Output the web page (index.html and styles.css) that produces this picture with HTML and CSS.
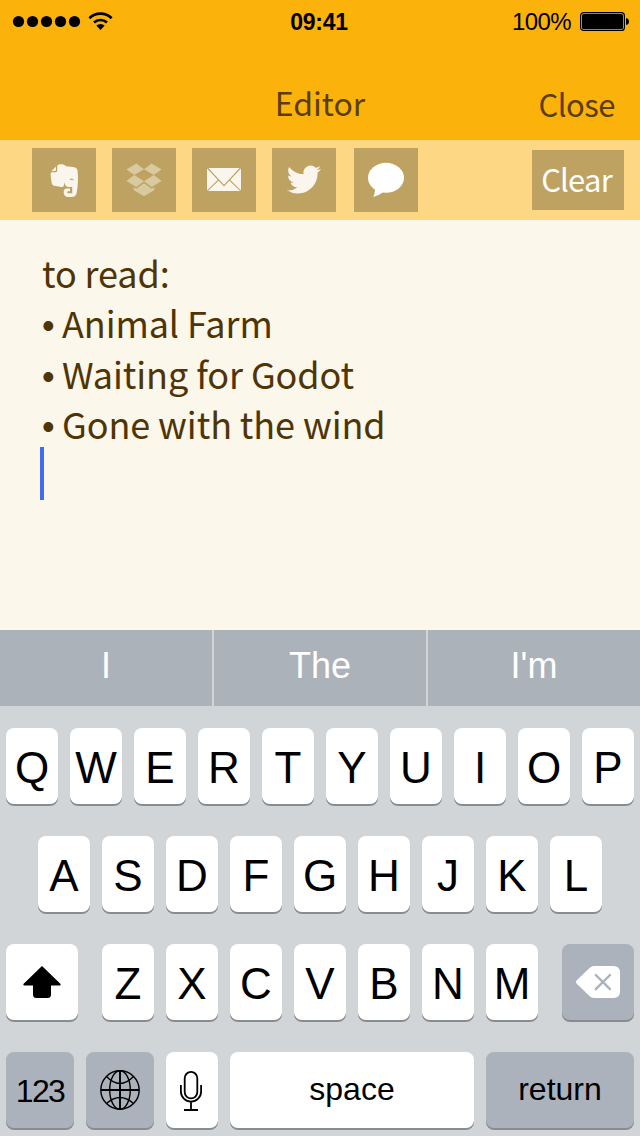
FILE: index.html
```html
<!DOCTYPE html>
<html lang="en">
<head>
  <meta charset="UTF-8">
  <meta name="viewport" content="width=device-width, initial-scale=1.0">
  <title>Editor</title>
  <link rel="stylesheet" href="styles.css">
</head>
<body>
  <header>
    <!-- Status bar -->
    <div class="status-bar">
      <svg class="signal" width="102" height="24" viewBox="0 0 102 24">
        <circle cx="6.5" cy="11.5" r="5.6"/>
        <circle cx="20.5" cy="11.5" r="5.6"/>
        <circle cx="34.5" cy="11.5" r="5.6"/>
        <circle cx="48.5" cy="11.5" r="5.6"/>
        <circle cx="62.5" cy="11.5" r="5.6"/>
        <path d="M77.4 8.2a15.8 15.8 0 0 1 22.200 0M82 12.600a9.400 9.400 0 0 1 13 0" fill="none" stroke="#000" stroke-width="2.700"/>
        <path d="M84.300 15.600a6.200 6.200 0 0 1 8.400 0L88.500 20z"/>
      </svg>
      <span class="time">09:41</span>
      <div class="battery">
        <span>100%</span>
        <svg width="50" height="20" viewBox="0 0 50 20">
          <rect x="0.6" y="0.6" width="43.8" height="17.8" rx="3" fill="none" stroke="#000" stroke-width="1.2"/>
          <rect x="2" y="2" width="41" height="15" rx="1.5"/>
          <path d="M46 6q3 .5 3 3.500t-3 3.500z"/>
        </svg>
      </div>
    </div>

    <div class="nav">
      <h1>Editor</h1>
      <a class="close">Close</a>
    </div>
  </header>

  <!-- Share buttons -->
  <div class="toolbar">
    <button class="share">
      <svg viewBox="0 0 64 64">
        <path d="M25.2 17.8C26.5 15.8 32 15.8 34 18.2L41 18.9C44 19.2 45.1 20.3 45.5 22.5C46.3 28 46.2 37 44.8 44.5C44.2 47.8 42.5 49 39.5 49H36.5C33.2 49 31.7 47.2 31.7 44.5V43.5C31.7 41.4 33 40.6 35 40.6H38V43.2H36.2C34.9 43.2 34.9 45.3 36.2 45.3H40.2V38.8C37 39.4 34 38.9 33 36.5L32.4 34.5L31.8 37.5C31.5 38.8 30.6 39.1 29 39L22.5 37.8C20.5 37.4 20 36.6 19.6 34.5L18.7 28C18.5 25.5 18.6 25 19.6 24.2H23.5C24.8 24.2 25.2 23.8 25.2 22.5z"/>
        <path d="M19.3 23.2L24 18.5V21.8Q24 23 22.8 23z"/>
        <path d="M37.8 31.600Q39.700 29.800 41.500 31.800Q39.500 31.200 37.800 31.600z" fill="#bda262" stroke="#bda262" stroke-width="0.600"/>
      </svg>
    </button>
    <button class="share">
      <svg viewBox="0 0 64 64" fill="#d9c99f">
        <path d="M24.3 15.6L32 21.2L22.3 27L14.4 21.5zM39.7 15.6L32 21.2L41.7 27L49.6 21.5zM22.3 27L32 33.3L24.3 38.9L14.4 32.9zM41.7 27L32 33.3L39.7 38.9L49.6 32.9z"/>
        <path d="M21.6 39.2L24.4 40.8L32 35.3L39.6 40.8L42.4 39.2V42L32 48.2L21.6 42z"/>
      </svg>
    </button>
    <button class="share">
      <svg viewBox="0 0 64 64">
        <path d="M15 20H49V43H15z"/>
        <path d="M15 19.5L32 37.6L49 19.5M15 43.2L26.6 31.9M49 43.2L37.4 31.9" fill="none" stroke="#bda262" stroke-width="1.1"/>
      </svg>
    </button>
    <button class="share">
      <svg viewBox="0 0 64 64">
        <path transform="translate(14.8 14.4) scale(1.43)" d="M23.953 4.57a10 10 0 01-2.825.775 4.958 4.958 0 002.163-2.723c-.951.555-2.005.959-3.127 1.184a4.92 4.92 0 00-8.384 4.482C7.69 8.095 4.067 6.13 1.64 3.162a4.822 4.822 0 00-.666 2.475c0 1.71.87 3.213 2.188 4.096a4.904 4.904 0 01-2.228-.616v.06a4.923 4.923 0 003.946 4.827 4.996 4.996 0 01-2.212.085 4.936 4.936 0 004.604 3.417 9.867 9.867 0 01-6.102 2.105c-.39 0-.779-.023-1.17-.067a13.995 13.995 0 007.557 2.209c9.053 0 13.998-7.496 13.998-13.985 0-.21 0-.42-.015-.63A9.935 9.935 0 0024 4.59z"/>
      </svg>
    </button>
    <button class="share message">
      <svg viewBox="0 0 64 64" fill="#fff">
        <ellipse cx="32" cy="29.8" rx="18" ry="15"/>
        <path d="M21.3 39L21 42.5Q20.8 45.5 19.3 49Q25 47.5 29 44.3z"/>
      </svg>
    </button>
    <button class="clear">Clear</button>
  </div>

  <main class="note">
    <p>to read:</p>
    <p><span class="bullet">•</span>Animal Farm</p>
    <p><span class="bullet">•</span>Waiting for Godot</p>
    <p><span class="bullet">•</span>Gone with the wind</p>
    <div class="cursor"></div>
  </main>

  <!-- Keyboard -->
  <div class="suggestions">
    <span>I</span>
    <span>The</span>
    <span>I'm</span>
  </div>

  <div class="keyboard">
    <div class="row">
      <div class="key">Q</div>
      <div class="key">W</div>
      <div class="key">E</div>
      <div class="key">R</div>
      <div class="key">T</div>
      <div class="key">Y</div>
      <div class="key">U</div>
      <div class="key">I</div>
      <div class="key">O</div>
      <div class="key">P</div>
    </div>
    <div class="row">
      <div class="key">A</div>
      <div class="key">S</div>
      <div class="key">D</div>
      <div class="key">F</div>
      <div class="key">G</div>
      <div class="key">H</div>
      <div class="key">J</div>
      <div class="key">K</div>
      <div class="key">L</div>
    </div>
    <div class="row">
      <div class="key icon shift">
        <svg width="38" height="32" viewBox="0 0 38 32">
          <path d="M19 0L37.6 18Q38 19.5 36.5 19.5H28V28.5Q28 32 24.5 32H13.5Q10 32 10 28.5V19.5H1.5Q0 19.5 .4 18z"/>
        </svg>
      </div>
      <div class="key">Z</div>
      <div class="key">X</div>
      <div class="key">C</div>
      <div class="key">V</div>
      <div class="key">B</div>
      <div class="key">N</div>
      <div class="key">M</div>
      <div class="key icon gray backspace">
        <svg width="44" height="32" viewBox="0 0 44 32">
          <path d="M18 0H37.5Q44 0 44 6.5V25.5Q44 32 37.5 32H18Q15.5 32 13.5 30L1 18Q-1 16 1 14L13.5 2Q15.5 0 18 0z" fill="#fff"/>
          <path d="M19.8 9L34 23.2M34 9L19.8 23.2" stroke="#abb2bb" stroke-width="2.4" stroke-linecap="round"/>
        </svg>
      </div>
    </div>
    <div class="row">
      <div class="key gray small wide numbers">123</div>
      <div class="key icon gray wide">
        <svg width="40" height="40" viewBox="0 0 40 40" fill="none" stroke="#000" stroke-width="1.4">
          <circle cx="20" cy="20" r="19.2"/>
          <ellipse cx="20" cy="20" rx="10.3" ry="19.2"/>
          <path d="M20 1V39M1 20H39" stroke-width="1.9"/>
          <path d="M6.5 6.5Q20 20.5 33.5 6.5M6.5 33.5Q20 21.5 33.5 33.5"/>
        </svg>
      </div>
      <div class="key icon mic">
        <svg width="22" height="40" viewBox="0 0 22 40" fill="none" stroke="#000" stroke-width="1.8">
          <rect x="4.7" y="0.9" width="12.6" height="26.5" rx="6.3"/>
          <path d="M0.9 14V20.5A10.1 10.1 0 0 0 21.1 20.5V14M11 30.6V39M4 39H18"/>
        </svg>
      </div>
      <div class="key small space">space</div>
      <div class="key gray small return">return</div>
    </div>
  </div>
</body>
</html>
```
FILE: styles.css
```css
* {
  box-sizing: border-box;
}

body {
  margin: 0;
  width: 640px;
  height: 1136px;
  overflow: hidden;
  background-color: #fbf7ea;
  font-family: "Liberation Sans", Arial, sans-serif;
}

svg {
  display: block;
}

header {
  height: 140px;
  background-color: #fbb20b;
}

.status-bar {
  display: grid;
  grid-template-columns: 1fr auto 1fr;
  align-items: center;
  height: 40px;
  padding: 3px 10px 0 12px;
  font-size: 24px;
  line-height: 36px;
}

.time {
  font-size: 23px;
  font-weight: bold;
  letter-spacing: -0.3px;
  margin-right: 4px;
}

.battery {
  display: flex;
  align-items: center;
  justify-content: flex-end;
  gap: 9px;
  letter-spacing: -0.6px;
}

.nav {
  display: grid;
  grid-template-columns: 1fr auto 1fr;
  align-items: center;
  height: 100px;
  padding: 27px 25px 0;
  font-family: "Noto Sans CJK SC", sans-serif;
  color: #5a3d08;
}

h1 {
  grid-column: 2;
  margin: -4px 0 0;
  font-size: 32px;
  font-weight: normal;
}

.close {
  justify-self: end;
  margin-top: -1px;
  font-size: 31px;
  letter-spacing: -0.5px;
}

.toolbar {
  display: flex;
  align-items: center;
  gap: 16px;
  height: 80px;
  padding: 0 16px 0 32px;
  background-color: #fdd783;
}

button {
  padding: 0;
  border: none;
  background-color: #bda262;
}

.share {
  width: 64px;
  height: 64px;
  fill: #faf6ed;
}

.message {
  margin-left: 2px;
}

.clear {
  width: 92px;
  height: 60px;
  margin-left: auto;
  padding: 0 3px 2px 0;
  color: white;
  font-family: "Noto Sans CJK SC", sans-serif;
  font-size: 31px;
  line-height: 58px;
  letter-spacing: -0.8px;
}

.note {
  height: 410px;
  padding: 27px 40px 0;
  color: #4f3405;
  font-family: "Noto Sans CJK SC", sans-serif;
  font-size: 36px;
  line-height: 50.3px;
  letter-spacing: -0.1px;
}

.note p {
  height: 50.3px;
  margin: 0;
  padding-left: 2px;
  white-space: nowrap;
}

.bullet {
  display: inline-block;
  width: 20px;
  font-family: "Liberation Sans", Arial, sans-serif;
  line-height: 1;
}

.cursor {
  width: 4px;
  height: 53px;
  margin-top: -1px;
  background-color: #426bf2;
}

.suggestions {
  display: grid;
  grid-template-columns: 212px 212px 212px;
  gap: 2px;
  height: 76px;
  background-color: #d1d5d8;
}

.suggestions span {
  background-color: #abb2b9;
  color: white;
  font-size: 36px;
  line-height: 71px;
  text-align: center;
}

.keyboard {
  display: flex;
  flex-direction: column;
  gap: 32px;
  height: 430px;
  padding: 22px 6px 0;
  background-color: #d1d5d8;
}

.row {
  display: flex;
  justify-content: center;
  gap: 12px;
}

.key {
  display: flex;
  align-items: center;
  justify-content: center;
  flex: none;
  width: 52px;
  height: 76px;
  padding-top: 3px;
  border-radius: 8px;
  background-color: white;
  box-shadow: 0 2px 0 #888b8f;
  font-size: 44px;
  line-height: 76px;
}

.icon {
  padding-top: 0;
}

.gray {
  background-color: #abb2bb;
}

.shift {
  width: 72px;
  margin-right: 12px;
}

.backspace {
  width: 72px;
  margin-left: 12px;
}

.mic {
  padding: 2px 2px 0 0;
}

.small {
  padding: 0 0 3px;
  font-size: 32px;
}

.wide {
  width: 68px;
}

.numbers {
  padding: 2px 0 0;
  letter-spacing: -1.6px;
}

.space {
  width: 244px;
}

.return {
  width: 148px;
}
```
